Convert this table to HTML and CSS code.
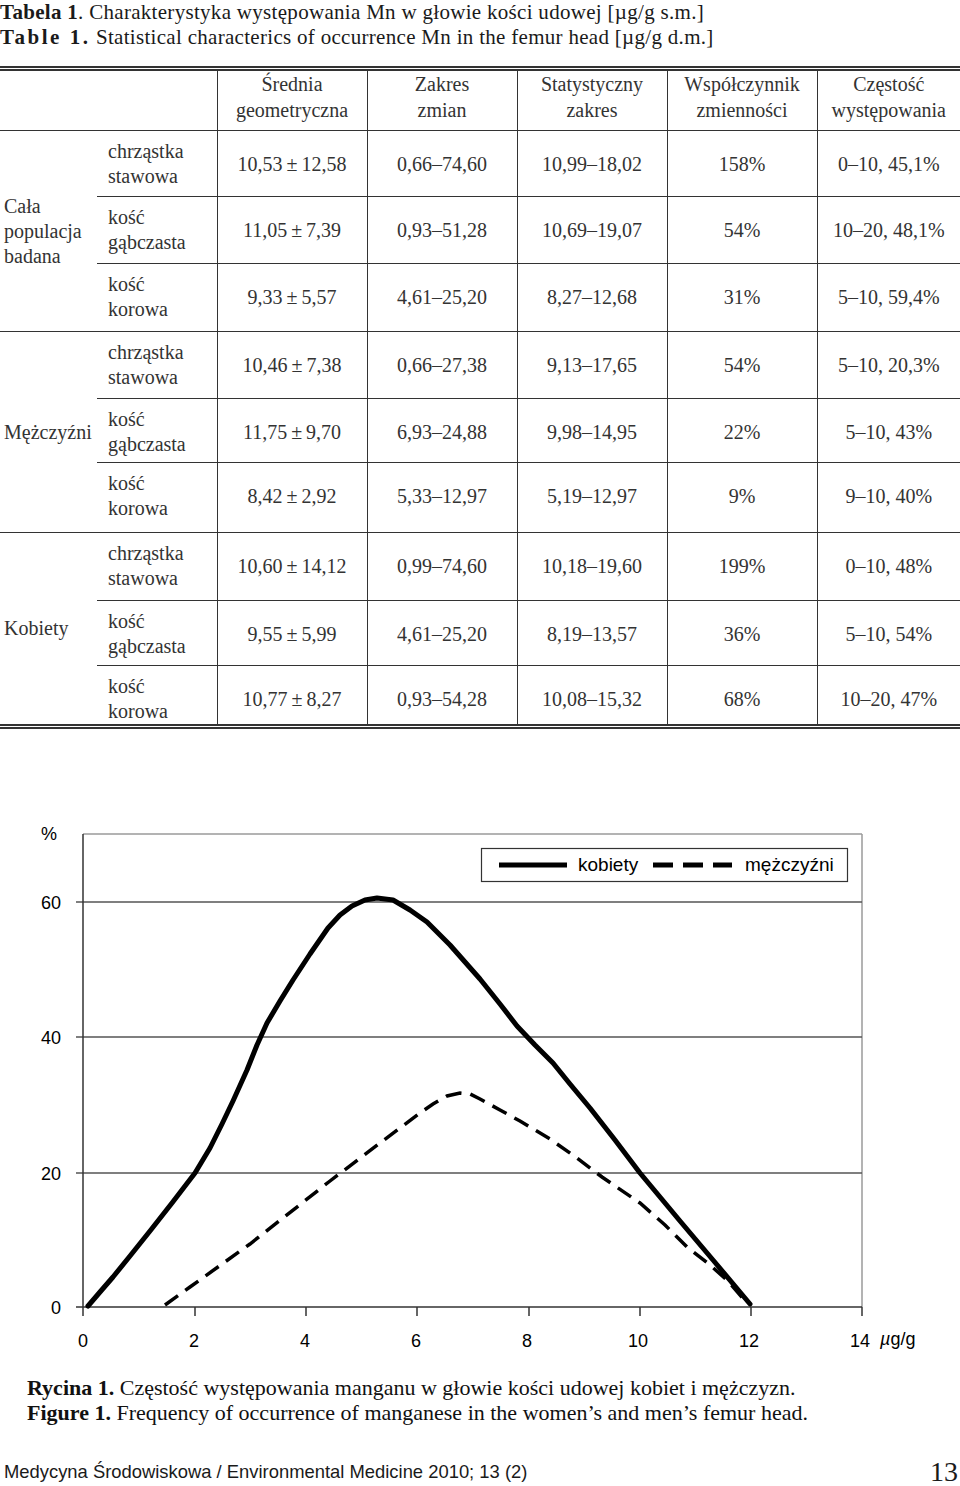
FILE: index.html
```html
<!DOCTYPE html>
<html lang="pl">
<head>
<meta charset="utf-8">
<title>Tabela 1</title>
<link rel="stylesheet" href="styles.css">
</head>
<body>
<header class="title">
  <p><b>Tabela 1</b>. Charakterystyka występowania Mn w głowie kości udowej [µg/g s.m.]</p>
  <p><b class="spaced">Table 1.</b> Statistical characterics of occurrence Mn in the femur head [µg/g d.m.]</p>
</header>

<table class="data">
  <colgroup>
    <col class="c-grp"><col class="c-sub"><col class="c-val"><col class="c-val"><col class="c-val"><col class="c-val"><col class="c-last">
  </colgroup>
  <thead>
    <tr>
      <th colspan="2"></th>
      <th>Średnia<br>geometryczna</th>
      <th>Zakres<br>zmian</th>
      <th>Statystyczny<br>zakres</th>
      <th>Współczynnik<br>zmienności</th>
      <th>Częstość<br>występowania</th>
    </tr>
  </thead>
  <tbody class="g1">
    <tr class="r1">
      <td rowspan="3" class="grp">Cała<br>populacja<br>badana</td>
      <td class="sub">chrząstka<br>stawowa</td>
      <td class="v">10,53&thinsp;±&thinsp;12,58</td><td class="v">0,66–74,60</td><td class="v">10,99–18,02</td><td class="v">158%</td><td class="v">0–10, 45,1%</td>
    </tr>
    <tr class="r2">
      <td class="sub">kość<br>gąbczasta</td>
      <td class="v">11,05&thinsp;±&thinsp;7,39</td><td class="v">0,93–51,28</td><td class="v">10,69–19,07</td><td class="v">54%</td><td class="v">10–20, 48,1%</td>
    </tr>
    <tr class="r3">
      <td class="sub">kość<br>korowa</td>
      <td class="v">9,33&thinsp;±&thinsp;5,57</td><td class="v">4,61–25,20</td><td class="v">8,27–12,68</td><td class="v">31%</td><td class="v">5–10, 59,4%</td>
    </tr>
  </tbody>
  <tbody class="g2">
    <tr class="r1">
      <td rowspan="3" class="grp">Mężczyźni</td>
      <td class="sub">chrząstka<br>stawowa</td>
      <td class="v">10,46&thinsp;±&thinsp;7,38</td><td class="v">0,66–27,38</td><td class="v">9,13–17,65</td><td class="v">54%</td><td class="v">5–10, 20,3%</td>
    </tr>
    <tr class="r2">
      <td class="sub">kość<br>gąbczasta</td>
      <td class="v">11,75&thinsp;±&thinsp;9,70</td><td class="v">6,93–24,88</td><td class="v">9,98–14,95</td><td class="v">22%</td><td class="v">5–10, 43%</td>
    </tr>
    <tr class="r3">
      <td class="sub">kość<br>korowa</td>
      <td class="v">8,42&thinsp;±&thinsp;2,92</td><td class="v">5,33–12,97</td><td class="v">5,19–12,97</td><td class="v">9%</td><td class="v">9–10, 40%</td>
    </tr>
  </tbody>
  <tbody class="g3">
    <tr class="r1">
      <td rowspan="3" class="grp">Kobiety</td>
      <td class="sub">chrząstka<br>stawowa</td>
      <td class="v">10,60&thinsp;±&thinsp;14,12</td><td class="v">0,99–74,60</td><td class="v">10,18–19,60</td><td class="v">199%</td><td class="v">0–10, 48%</td>
    </tr>
    <tr class="r2">
      <td class="sub">kość<br>gąbczasta</td>
      <td class="v">9,55&thinsp;±&thinsp;5,99</td><td class="v">4,61–25,20</td><td class="v">8,19–13,57</td><td class="v">36%</td><td class="v">5–10, 54%</td>
    </tr>
    <tr class="r3">
      <td class="sub">kość<br>korowa</td>
      <td class="v">10,77&thinsp;±&thinsp;8,27</td><td class="v">0,93–54,28</td><td class="v">10,08–15,32</td><td class="v">68%</td><td class="v">10–20, 47%</td>
    </tr>
  </tbody>
</table>

<figure class="chart">
  <svg class="plot" width="960" height="570" viewBox="0 790 960 570" xmlns="http://www.w3.org/2000/svg">
    <!-- frame -->
    <line x1="83" y1="834" x2="862" y2="834" stroke="#9a9a9a" stroke-width="1.5"/>
    <line x1="862" y1="834" x2="862" y2="1307" stroke="#9a9a9a" stroke-width="1.5"/>
    <!-- gridlines -->
    <line x1="76" y1="902" x2="862" y2="902" stroke="#555" stroke-width="1.5"/>
    <line x1="76" y1="1037" x2="862" y2="1037" stroke="#555" stroke-width="1.5"/>
    <line x1="76" y1="1173" x2="862" y2="1173" stroke="#555" stroke-width="1.5"/>
    <!-- axes -->
    <line x1="83" y1="834" x2="83" y2="1316" stroke="#333" stroke-width="1.5"/>
    <line x1="76" y1="1307" x2="862" y2="1307" stroke="#333" stroke-width="1.5"/>
    <g stroke="#333" stroke-width="1.5">
      <line x1="195" y1="1307" x2="195" y2="1316"/>
      <line x1="306" y1="1307" x2="306" y2="1316"/>
      <line x1="417" y1="1307" x2="417" y2="1316"/>
      <line x1="529" y1="1307" x2="529" y2="1316"/>
      <line x1="640" y1="1307" x2="640" y2="1316"/>
      <line x1="751" y1="1307" x2="751" y2="1316"/>
      <line x1="862" y1="1307" x2="862" y2="1316"/>
    </g>
    <!-- y labels -->
    <g class="axis-text" text-anchor="end">
      <text x="57" y="840">%</text>
      <text x="61" y="909">60</text>
      <text x="61" y="1044">40</text>
      <text x="61" y="1180">20</text>
      <text x="61" y="1314">0</text>
    </g>
    <!-- x labels -->
    <g class="axis-text" text-anchor="middle">
      <text x="83" y="1347">0</text>
      <text x="194" y="1347">2</text>
      <text x="305" y="1347">4</text>
      <text x="416" y="1347">6</text>
      <text x="527" y="1347">8</text>
      <text x="638" y="1347">10</text>
      <text x="749" y="1347">12</text>
      <text x="860" y="1347">14</text>
    </g>
    <text class="axis-text" x="880" y="1345"><tspan font-style="italic">µ</tspan>g/g</text>
    <!-- legend -->
    <rect x="481.5" y="848.5" width="366" height="33" fill="#fff" stroke="#333" stroke-width="1.2"/>
    <line x1="499" y1="865" x2="567" y2="865" stroke="#000" stroke-width="5"/>
    <text class="legend-text" x="578" y="871">kobiety</text>
    <g stroke="#000" stroke-width="5">
      <line x1="653" y1="865" x2="673" y2="865"/>
      <line x1="683" y1="865" x2="703" y2="865"/>
      <line x1="713" y1="865" x2="732" y2="865"/>
    </g>
    <text class="legend-text" x="745" y="871">mężczyźni</text>
    <!-- women: solid -->
    <polyline fill="none" stroke="#000" stroke-width="5" stroke-linejoin="round" stroke-linecap="round"
      points="88,1306 100,1292 113,1277 130,1256 150,1231 172,1203 195,1173 210,1148 222,1124 233,1101 247,1070 257,1045 267,1023 280,1001 293,980 310,954 328,928 340,915 352,906 365,900 377,898 393,900 410,910 427,922 450,945 480,979 500,1004 517,1026 535,1045 553,1063 570,1084 590,1108 615,1140 640,1173 660,1197 680,1221 713,1260 750,1304"/>
    <!-- men: dashed -->
    <polyline fill="none" stroke="#000" stroke-width="3.5" stroke-dasharray="16 9"
      points="165,1305 190,1287 250,1244 330,1181 380,1143 420,1113 433,1104 447,1096 460,1093 470,1094 480,1099 500,1110 520,1121 550,1139 577,1158 602,1177 640,1203 665,1225 687,1247 710,1265 727,1280 747,1303"/>
  </svg>
</figure>

<section class="fig-caption">
  <p><b>Rycina 1.</b> Częstość występowania manganu w głowie kości udowej kobiet i mężczyzn.</p>
  <p><b>Figure 1.</b> Frequency of occurrence of manganese in the women’s and men’s femur head.</p>
</section>

<footer class="page-foot">
  <span class="journal">Medycyna Środowiskowa / Environmental Medicine 2010; 13 (2)</span>
  <span class="page-no">13</span>
</footer>
</body>
</html>
```

FILE: styles.css
```css
html, body {
  margin: 0;
  padding: 0;
  background: #fff;
}

body {
  width: 960px;
  color: #1a1a1a;
  font-family: "Liberation Serif", "Times New Roman", serif;
}

p {
  margin: 0;
}

.title {
  font-size: 21px;
  line-height: 25px;
  letter-spacing: 0.3px;
  margin-bottom: 16px;
}

.title .spaced {
  letter-spacing: 2.5px;
}

.data {
  width: 960px;
  table-layout: fixed;
  border-collapse: collapse;
  font-size: 20px;
  line-height: 25px;
  color: #333;
  border-top: 5px double #333;
  border-bottom: 5px double #333;
}

.c-grp { width: 97px; }
.c-sub { width: 120px; }
.c-val { width: 150px; }
.c-last { width: 143px; }

.data th {
  font-weight: normal;
  vertical-align: top;
  padding: 0;
  height: 59px;
  line-height: 26px;
  border-bottom: 1px solid #333;
}

.data th + th {
  border-left: 1px solid #333;
}

.data td {
  padding: 8px 0 0;
  vertical-align: top;
  text-align: center;
  border-bottom: 1px solid #333;
}

.data td.v {
  line-height: 50px;
  border-left: 1px solid #333;
  white-space: nowrap;
}

.data td.grp {
  vertical-align: middle;
  text-align: left;
  padding: 0 0 0 4px;
}

.data td.sub {
  text-align: left;
  padding-left: 11px;
}

.g1 .r1 { height: 66px; }
.g1 .r2 { height: 67px; }
.g1 .r3 { height: 68px; }
.g2 .r1 { height: 67px; }
.g2 .r2 { height: 64px; }
.g2 .r3 { height: 70px; }
.g3 .r1 { height: 68px; }
.g3 .r2 { height: 65px; }
.g3 .r3 { height: 60px; }

.chart {
  margin: 61px 0 0;
}

.plot {
  display: block;
}

.axis-text {
  font-family: "Liberation Sans", Arial, sans-serif;
  font-size: 18px;
  fill: #000;
}

.legend-text {
  font-family: "Liberation Sans", Arial, sans-serif;
  font-size: 19px;
  fill: #000;
}

.fig-caption {
  padding: 15px 0 0 27px;
  font-size: 22px;
  line-height: 25px;
  color: #111;
}

.page-foot {
  display: flex;
  justify-content: space-between;
  align-items: flex-end;
  padding: 33px 2px 0 4px;
}

.journal {
  font-family: "Liberation Sans", Arial, sans-serif;
  font-size: 18.4px;
  line-height: 22px;
  padding-bottom: 3px;
}

.page-no {
  font-size: 28px;
  line-height: 28px;
}
```
